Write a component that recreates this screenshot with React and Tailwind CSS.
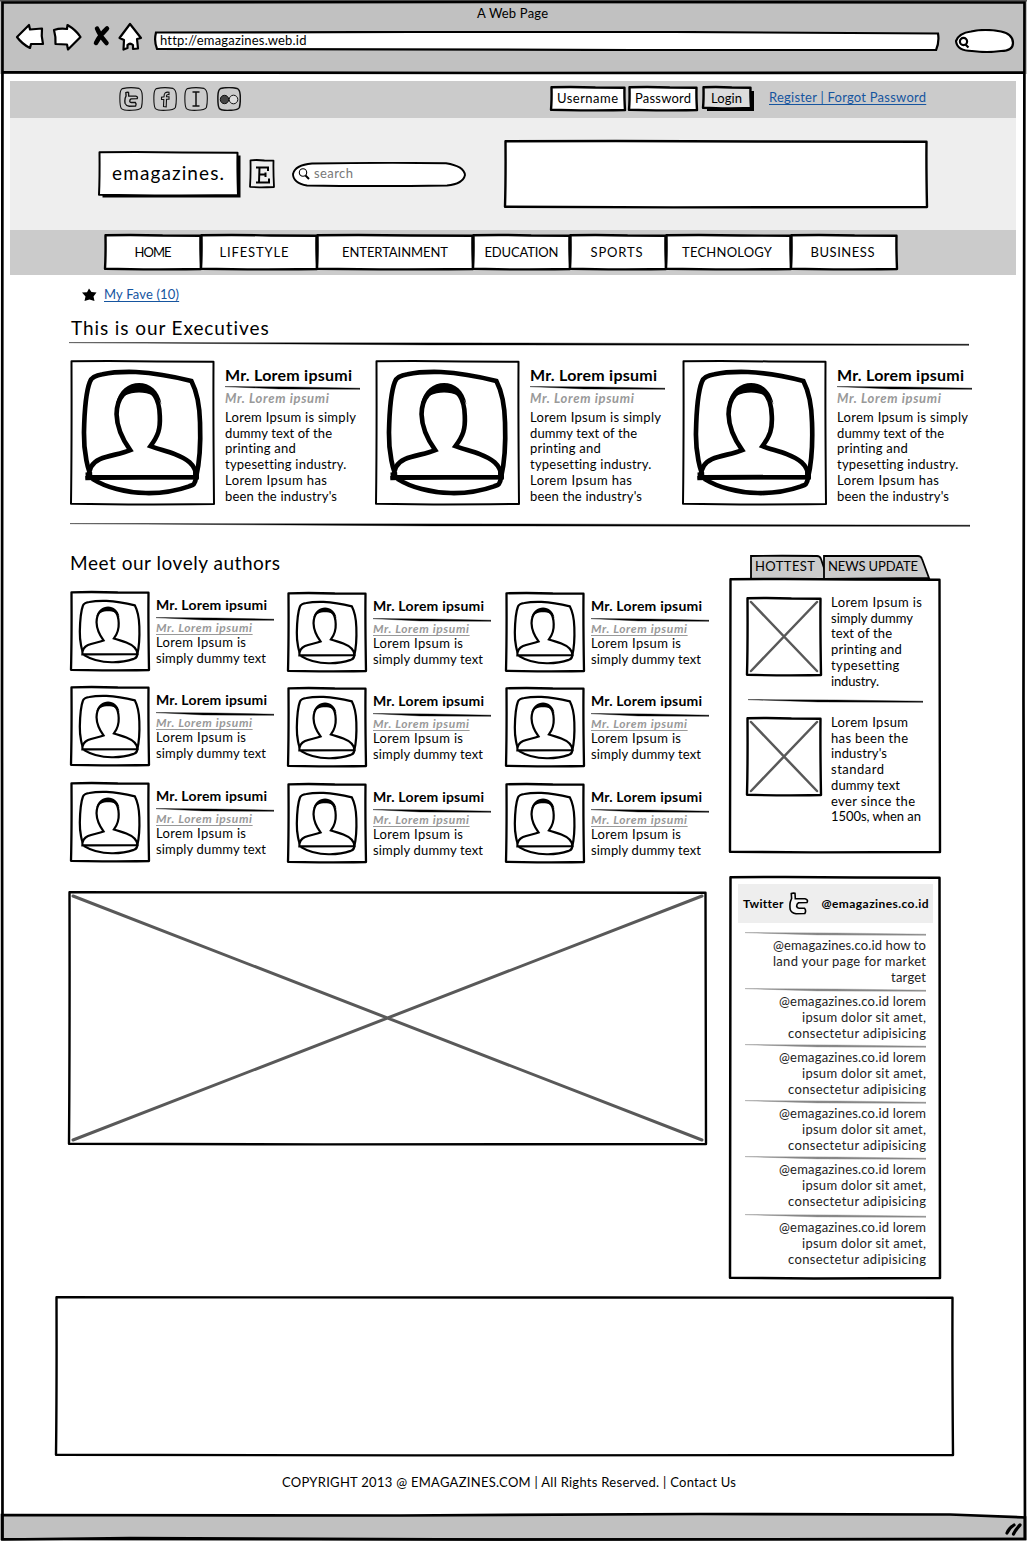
import React, { useLayoutEffect, useRef, useState } from "react";

/* A single line of text whose tracking is computed so it spans `w` pixels. */
function Line({ text, w, className = "" }) {
  const ref = useRef(null);
  const [spacing, setSpacing] = useState(0);
  useLayoutEffect(() => {
    const el = ref.current;
    el.style.letterSpacing = "0px";
    const natural = el.getBoundingClientRect().width;
    setSpacing((w - natural) / (text.length - 1));
    el.style.letterSpacing = `${(w - natural) / (text.length - 1)}px`;
  }, [text, w]);
  return (
    <span ref={ref} style={{ letterSpacing: `${spacing}px`, marginRight: `${-spacing}px` }} className={`block w-fit whitespace-nowrap ${className}`}>
      {text}
    </span>
  );
}

/* Hand-drawn rectangle behind its children. */
function Sketch({ w, h, fill = "#fff", stroke = 2.4, shadow = 0, className = "", children }) {
  return (
    <div className={`relative shrink-0 ${className}`} style={{ width: w, height: h }}>
      <svg className="absolute inset-0 overflow-visible" width={w} height={h} aria-hidden="true">
        {shadow > 0 && <path d={`M${shadow} ${shadow}H${w + shadow - 1}V${h + shadow - 1}H${shadow}Z`} fill="#000" />}
        <path
          d={`M0.5 0.3 Q${w * 0.3} -0.4 ${w * 0.6} 0.5 L${w - 0.5} 0.7 Q${w - 0.8} ${h * 0.4} ${w} ${h} Q${w * 0.6} ${h + 0.5} ${w * 0.4} ${h + 0.4} L0 ${h - 0.2} Q0.8 ${h * 0.6} 0.5 0.3Z`}
          fill={fill}
          stroke="#000"
          strokeWidth={stroke}
          strokeLinejoin="round"
        />
      </svg>
      <div className="relative h-full">{children}</div>
    </div>
  );
}

/* Slightly tilted pen stroke used as a divider. */
function Rule({ w, color = "#000", className = "" }) {
  return (
    <svg className={`block h-[4px] shrink-0 ${className}`} width={w} height="4" aria-hidden="true">
      <path d={`M0 0.6 L${w * 0.5} 1 L${w} 2.2 L${w} 3.3 L${w * 0.4} 2.9Z`} fill={color} stroke={color} strokeWidth="0.4" />
    </svg>
  );
}

function Avatar({ size, small = false }) {
  return (
    <Sketch w={size} h={size} stroke={small ? 2.3 : 2}>
      <svg className="block" width={size} height={size} viewBox="0 0 430 430" fill="none" stroke="#000">
        <g transform={small ? "translate(12 18) scale(.94 .93)" : undefined} strokeWidth={small ? 13 : 14}>
          <path d="M57 62C62 48 75 43 95 40C125 33 160 32 195 33C250 36 310 47 362 60C380 95 387 140 388 185C390 240 388 300 376 350C373 375 364 373 355 377C310 393 270 398 225 397C165 396 105 380 67 356C50 335 38 270 39 215C40 165 44 95 57 62Z" />
          <path fill="#fff" d="M54 350C53 325 65 305 87 295C115 283 150 280 178 268C158 240 138 205 137 160C138 108 165 81 205 81C245 81 266 112 267 165C269 205 262 225 239 256C262 265 290 271 312 280C345 293 376 310 377 349Z" />
          <path fill="#000" stroke="none" d="M135 130C150 45 260 45 272 130C255 83 155 83 135 130Z" />
          {!small && <path strokeWidth="13" d="M43 352L210 349L384 349" />}
          {!small && <path strokeWidth="20" d="M44 345L64 344M367 342L384 342" />}
        </g>
      </svg>
    </Sketch>
  );
}

function CrossImage({ w, h, stroke = 3 }) {
  return (
    <Sketch w={w} h={h}>
      <svg className="block" width={w} height={h} aria-hidden="true">
        <path d={`M4 4L${w - 4} ${h - 4}M${w - 4} 4L4 ${h - 4}`} stroke="#595959" strokeWidth={stroke} strokeLinecap="round" />
      </svg>
    </Sketch>
  );
}

/* Drawn in a 20 x 23 box. */
const TWITTER = "M2.300 1.500Q4 .8 6 1.300L6.300 6.800L16 6.700Q19.500 7.500 18 10.500L9.500 10.800Q7.500 12 7.700 14.500Q8 16 10 16.200H15.500Q17.500 18.500 15.800 21.500L7 21.700Q2.500 21 1.200 17.500Q.6 13 1.300 10L2.600 6.500Z";

function SocialTile({ children, heavy = false, className = "" }) {
  return (
    <svg className={`block h-[24px] w-[24px] shrink-0 ${className}`} viewBox="0 0 24 24" fill="none" stroke="#111" aria-hidden="true">
      <path d="M3.5 1.6C8 .5 16 .6 20 1.4C22.5 2.5 23 4.5 23.2 8C23.5 13 23.3 17 22.4 20.5C21 23 18 23.2 13 23.3C8 23.6 4.5 23.4 2.4 21.6C.6 19 .8 14 .9 9C1 5 1.4 2.6 3.5 1.6Z" strokeWidth={heavy ? 1.5 : 1.1} />
      {children}
    </svg>
  );
}

const EXEC_TEXT = [
  ["Lorem Ipsum is simply", 131],
  ["dummy text of the", 107],
  ["printing and", 71],
  ["typesetting industry.", 121],
  ["Lorem Ipsum has", 102],
  ["been the industry's", 112],
];

function Executive({ className = "" }) {
  return (
    <div className={`flex shrink-0 ${className}`}>
      <Avatar size={143} />
      <div className="ml-[11px] w-[136px] pt-[4px]">
        <Line text="Mr. Lorem ipsumi" w={127} className="text-[16px] font-bold leading-5" />
        <Rule w={135} className="mt-[1px]" />
        <Line text="Mr. Lorem ipsumi" w={104} className="text-[13px] font-bold italic leading-4 text-[#999]" />
        <div className="mt-[4px]">
          {EXEC_TEXT.map(([t, w]) => (
            <Line key={t} text={t} w={w} className="text-[13px] leading-[15.7px]" />
          ))}
        </div>
      </div>
    </div>
  );
}

function Author({ className = "" }) {
  return (
    <div className={`flex h-[78px] shrink-0 ${className}`}>
      <Avatar size={78} small />
      <div className="ml-[7px] w-[118px] pt-[5px]">
        <Line text="Mr. Lorem ipsumi" w={111} className="text-[14px] font-bold leading-4" />
        <Rule w={118} className="mt-[4px]" />
        <Line text="Mr. Lorem ipsumi" w={96} className="h-[13px] text-[12px] font-bold italic leading-[14px] text-[#999] underline underline-offset-2" />
        <Line text="Lorem Ipsum is" w={90} className="text-[13px] leading-4" />
        <Line text="simply dummy text" w={110} className="text-[13px] leading-4" />
      </div>
    </div>
  );
}

const NAV = [
  ["HOME", 37, 96],
  ["LIFESTYLE", 69, 116],
  ["ENTERTAINMENT", 106, 156],
  ["EDUCATION", 74, 97],
  ["SPORTS", 52, 96],
  ["TECHNOLOGY", 90, 125],
  ["BUSINESS", 64, 106],
];

const NEWS = [
  [["Lorem Ipsum is", 91], ["simply dummy", 82], ["text of the", 61], ["printing and", 71], ["typesetting", 68], ["industry.", 48]],
  [["Lorem Ipsum", 77], ["has been the", 77], ["industry's", 56], ["standard", 53], ["dummy text", 69], ["ever since the", 84], ["1500s, when an", 90]],
];

const LOREM_TWEET = [["@emagazines.co.id lorem", 147], ["ipsum dolor sit amet,", 124], ["consectetur adipisicing", 138]];
const TWEETS = [
  [["@emagazines.co.id how to", 153], ["land your page for market", 153], ["target", 35]],
  LOREM_TWEET,
  LOREM_TWEET,
  LOREM_TWEET,
  LOREM_TWEET,
  LOREM_TWEET,
];

function BrowserBar() {
  return (
    <header className="h-[74px] bg-[#c1c1c1] pt-[5px]">
      <Line text="A Web Page" w={71} className="ml-[477px] text-[13px] leading-4" />
      <div className="flex items-start pl-[15px]">
        <svg className="h-[32px] w-[130px] shrink-0" viewBox="15 21 130 32" fill="#fff" stroke="#000" strokeWidth="2.200" strokeLinejoin="round" aria-hidden="true">
          <path d="M17 37L29 25L30 29.500L42 28.500Q41 36 43 44L31 44L30 48Q22 44 17 37Z" />
          <path d="M54 30Q60 28 67 29L67.500 25Q76 30 80.500 37L68 49.500L67 44.500L55.500 44Q56 37 54 30Z" />
          <path d="M119.500 38L130 24L141 38L137 39L138 48.500L133 49V45Q130 42.500 127.500 45V48L123.500 49.500L124 40Z" />
          <path d="M97 28.500Q100 36 106.500 43M107 28.500Q100 35 96 43" fill="none" strokeWidth="4.500" strokeLinecap="round" />
        </svg>
        <div className="relative ml-[8px] mt-[10px] h-[20px] w-[787px] shrink-0">
          <svg className="absolute inset-0" width="787" height="20" aria-hidden="true">
            <path d="M3 1.500L260 1L520 1L785 2.500Q786.500 11 783 19.200L480 19L4 17.800Q.8 10 3 1.500Z" fill="#fff" stroke="#000" strokeWidth="2.200" />
          </svg>
          <Line text="http://emagazines.web.id" w={146} className="relative ml-[7px] pt-px text-[13px] leading-4" />
        </div>
        <svg className="ml-[15px] mt-[8px] h-[24px] w-[60px] shrink-0" viewBox="955 29 60 24" fill="#fff" stroke="#000" strokeWidth="2.200" aria-hidden="true">
          <path d="M956 41Q959 33 971 31.500Q985 28.500 1001 31.500Q1013 34 1013 43Q1013 51 1001 51Q987 53 972 51Q957 51 956 41Z" />
          <circle cx="963.500" cy="41.500" r="3.600" />
          <path d="M965.500 44.500L968.500 47.500" />
        </svg>
      </div>
    </header>
  );
}

function TopBand() {
  return (
    <div className="flex h-[37px] items-start bg-[#cbcbcb] pl-[109px]">
      <div className="flex pt-[6px]">
        <SocialTile>
          <path d={TWITTER} strokeWidth="1.900" transform="translate(5.200 4.500) scale(.72 .68)" />
        </SocialTile>
        <SocialTile className="ml-[10px]">
          <path d="M10.500 19.500L10.800 12.500H8.500V10.200L11 9.800C11 6 12.500 4.800 16 5.200V7.600C14 7.400 13.400 8 13.500 9.800H16V12.200H13.500L13.200 19.800Z" strokeWidth="1.100" />
        </SocialTile>
        <SocialTile className="ml-[7px]">
          <path d="M8.500 5H15.500M12 5V19M8.500 19H15.500" strokeWidth="1.500" />
        </SocialTile>
        <SocialTile heavy className="ml-[9px]">
          <circle cx="7.500" cy="12.500" r="4.200" fill="#444" strokeWidth="1" />
          <circle cx="16.500" cy="12.500" r="4.300" fill="#ddd" strokeWidth="1" />
        </SocialTile>
      </div>
      <div className="ml-[310px] flex pt-[6px]">
        <Sketch w={74} h={23}>
          <Line text="Username" w={61} className="ml-[6px] pt-[3px] text-[13px] leading-4" />
        </Sketch>
        <Sketch w={68} h={23} className="ml-[4px]">
          <Line text="Password" w={56} className="ml-[6px] pt-[3px] text-[13px] leading-4" />
        </Sketch>
        <Sketch w={48} h={21} fill="#dcdcdc" shadow={4} className="ml-[6px]">
          <Line text="Login" w={31} className="ml-[8px] pt-[3px] text-[13px] leading-4" />
        </Sketch>
        <Line text="Register | Forgot Password" w={157} className="ml-[18px] pt-[2px] text-[13px] leading-4 text-[#16559f] underline underline-offset-2" />
      </div>
    </div>
  );
}

function Masthead() {
  return (
    <div className="flex h-[112px] items-start bg-[#eee] pl-[89px]">
      <Sketch w={139} h={43} stroke={2} shadow={3.5} className="mt-[34px]">
        <Line text="emagazines." w={112} className="ml-[13px] pt-[9px] text-[19px] leading-6" />
      </Sketch>
      <Sketch w={24} h={27} fill="#eee" stroke={1.8} className="ml-[12px] mt-[42px]">
        <svg className="block" width="24" height="27" fill="none" stroke="#000" strokeWidth="2" aria-hidden="true">
          <path d="M6 7.500H18V11M9.500 7.500L9 22M6 22.500H19V18.500M9.500 14.500H15M15.500 12.500V17" />
        </svg>
      </Sketch>
      <div className="relative ml-[18px] mt-[44px] h-[26px] w-[174px] shrink-0">
        <svg className="absolute inset-0" width="174" height="26" fill="#fff" stroke="#000" aria-hidden="true">
          <path d="M20 1.500Q90 .5 154 1.200Q172 4 173 13Q171 22 155 23.500Q80 24.500 15 23.500Q1 21 1 12Q3 3 20 1.500Z" strokeWidth="1.900" />
          <circle cx="11" cy="10.500" r="3.700" strokeWidth="1.100" />
          <path d="M13.500 13.500L17 17" strokeWidth="2" />
        </svg>
        <Line text="search" w={39} className="relative ml-[22px] pt-[3px] text-[13px] leading-4 text-[#777]" />
      </div>
      <Sketch w={422} h={66} className="ml-[39px] mt-[23px]" />
    </div>
  );
}

function Navigation() {
  return (
    <nav className="flex h-[45px] bg-[#cbcbcb] pl-[95px] pt-[5px]">
      {NAV.map(([label, textWidth, cell], i) => (
        <Sketch key={label} w={cell} h={34} stroke={2.4}>
          <div className={i === 1 ? "flex h-full items-center justify-center pr-[10px]" : i < 4 ? "flex h-full items-center justify-center" : "flex h-full items-center justify-center pr-[3px]"}>
            <Line text={label} w={textWidth} className="text-[13px] leading-4" />
          </div>
        </Sketch>
      ))}
    </nav>
  );
}

function NewsLines({ lines }) {
  return (
    <div className="-mt-[3px] ml-[10px]">
      {lines.map(([t, w]) => <Line key={t} text={t} w={w} className="text-[13px] leading-[15.7px]" />)}
    </div>
  );
}

function NewsPanel() {
  return (
    <section>
      <div className="relative ml-[20px] h-[24px] w-[180px]">
        <svg className="absolute inset-0 overflow-visible" width="180" height="24" fill="#cbcbcb" stroke="#000" strokeWidth="1.800" aria-hidden="true">
          <path d="M1 24V1Q30 .5 67 1Q70 1 71 4L77 22V24Z" />
          <path d="M74 24V1H168Q171 1 172 4L179 23Z" />
        </svg>
        <div className="relative flex pt-[3px] text-[13px] leading-4">
          <Line text="HOTTEST" w={60} className="ml-[5px]" />
          <Line text="NEWS UPDATE" w={90} className="ml-[13px]" />
        </div>
      </div>
      <Sketch w={210} h={273}>
        <div className="flex h-[121px] pt-[19px]">
          <div className="ml-[17px]"><CrossImage w={74} h={77} stroke={2.5} /></div>
          <NewsLines lines={NEWS[0]} />
        </div>
        <Rule w={175} className="-mt-[1px] ml-[18px]" />
        <div className="flex pt-[15px]">
          <div className="ml-[17px]"><CrossImage w={74} h={77} stroke={2.5} /></div>
          <NewsLines lines={NEWS[1]} />
        </div>
      </Sketch>
    </section>
  );
}

function TwitterPanel() {
  return (
    <Sketch w={210} h={401} stroke={2.5} className="mt-[25px]">
      <div className="px-[8px] pt-[7px]">
        <div className="flex h-[39px] w-[195px] items-center bg-[#eee] pl-[5px]">
          <Line text="Twitter" w={40} className="text-[12px] font-bold leading-4" />
          <svg className="ml-[5px] h-[23px] w-[20px] shrink-0" viewBox="0 0 20 23" fill="#f6f6f6" stroke="#000" strokeWidth="1.600" aria-hidden="true">
            <path d={TWITTER} />
          </svg>
          <Line text="@emagazines.co.id" w={107} className="ml-[13px] text-[12px] font-bold leading-4" />
        </div>
      </div>
      <div className="ml-[15px] w-[181px] pt-[9px]">
        {TWEETS.map((lines, i) => (
          <div key={i} className={i === 5 ? "mt-[2px] h-[56px]" : "h-[56px]"}>
            <Rule w={181} color="#888" />
            <div className="mt-px flex flex-col items-end">
              {lines.map(([t, w]) => <Line key={t} text={t} w={w} className="text-[13px] leading-4 text-[#222]" />)}
            </div>
          </div>
        ))}
      </div>
    </Sketch>
  );
}

export default function App() {
  return (
    <div className="relative h-[1542px] w-[1027px] overflow-hidden bg-white font-['Lato','Open_Sans',sans-serif] text-black">
      <BrowserBar />
      <div className="ml-[10px] mt-[7px] w-[1006px]">
        <TopBand />
        <Masthead />
        <Navigation />
      </div>

      <main className="h-[1239px]">
        <div className="flex items-center pl-[82px] pt-[11px]">
          <svg className="mt-[2px] h-[14px] w-[15px]" viewBox="0 0 15 14" aria-hidden="true">
            <path d="M7 .5L9.500 4L14.500 4.500L11.500 8.500L12.500 13L7.500 11.500L2.500 13L3.500 8.500L0 4.500L5 4.200Z" />
          </svg>
          <Line text="My Fave (10)" w={75} className="ml-[7px] text-[13px] leading-4 text-[#16559f] underline underline-offset-2" />
        </div>
        <Line text="This is our Executives" w={198} className="ml-[71px] mt-[14px] text-[19px] leading-6" />
        <Rule w={900} className="ml-[69px] mt-[2px]" />
        <div className="ml-[71px] mt-[15px] flex h-[144px]">
          <Executive />
          <Executive className="ml-[15px]" />
          <Executive className="ml-[17px]" />
        </div>
        <Rule w={900} className="ml-[70px] mt-[18px]" />

        <div className="ml-[69px] mt-[24px] flex">
          <div className="w-[661px] shrink-0">
            <Line text="Meet our lovely authors" w={210} className="ml-[1px] text-[19px] leading-6" />
            <div className="ml-[2px] mt-[17px] flex flex-col gap-[16px]">
              {[0, 1, 2].map((row) => (
                <div key={row} className={row === 2 ? "mt-px flex" : "flex"}>
                  <Author />
                  <Author className="ml-[14px] mt-[1px]" />
                  <Author className="ml-[15px] mt-[1px]" />
                </div>
              ))}
            </div>
            <div className="mt-[30px]"><CrossImage w={637} h={252} /></div>
          </div>
          <div className="pt-[4px]">
            <NewsPanel />
            <TwitterPanel />
          </div>
        </div>

        <Sketch w={897} h={158} className="ml-[56px] mt-[19px]" />
        <Line text="COPYRIGHT 2013 @ EMAGAZINES.COM | All Rights Reserved. | Contact Us" w={454} className="ml-[282px] mt-[19px] text-[13px] leading-4" />
      </main>

      <svg className="pointer-events-none absolute inset-0" width="1027" height="1542" fill="none" stroke="#000" strokeWidth="2.700" aria-hidden="true">
        <path d="M0 0H1027V1.500H0Z" fill="#555" stroke="none" />
        <path d="M2 1515L400 1515.500L700 1514L950 1514.500L1025 1517.500V1539L500 1539.500L2 1539Z" fill="#c1c1c1" />
        <path d="M2.500 2.500L500 2L1024.500 2.500L1023.500 700L1025 1539L500 1539.500L130 1538L2.500 1539.500L2 700Z" />
        <path d="M2 72.400L500 73L1025 72.600" />
        <path d="M1007 1533Q1009 1528 1014 1525M1013.500 1534Q1016 1529 1020 1525" strokeWidth="3.200" strokeLinecap="round" />
      </svg>
    </div>
  );
}
